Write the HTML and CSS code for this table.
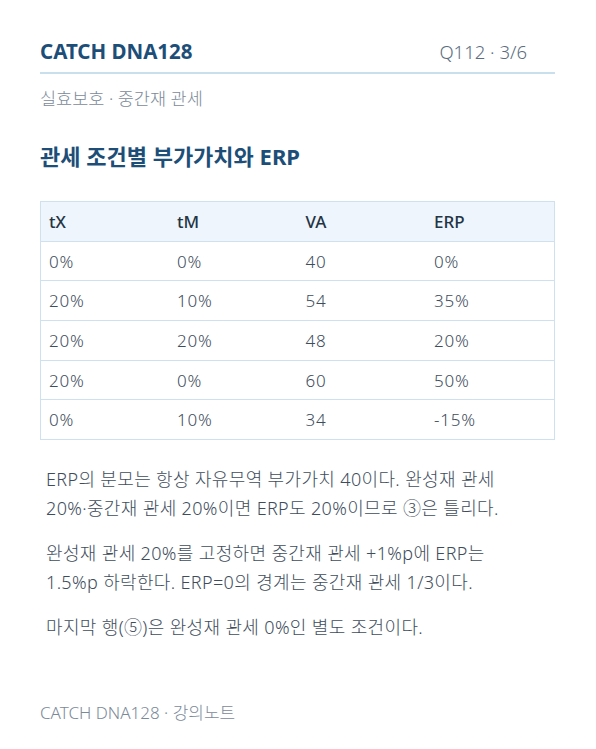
FILE: index.html
```html
<!DOCTYPE html>
<html lang="ko">
<head>
<meta charset="UTF-8">
<meta name="viewport" content="width=device-width, initial-scale=1.0">
<title>CATCH DNA128 · Q112</title>
<link rel="stylesheet" href="styles.css">
</head>
<body>

<div class="page">
    <!-- 상단 -->
    <div class="top">
        <div class="brand">CATCH DNA128</div>
        <div class="qnum">Q112 · 3/6</div>
    </div>
    <div class="crumb">실효보호 · 중간재 관세</div>

    <h1 class="title">관세 조건별 부가가치와 ERP</h1>

    <!-- 표 -->
    <table class="erp">
        <thead>
            <tr><th>tX</th><th>tM</th><th>VA</th><th>ERP</th></tr>
        </thead>
        <tbody>
            <tr><td>0%</td><td>0%</td><td>40</td><td>0%</td></tr>
            <tr><td>20%</td><td>10%</td><td>54</td><td>35%</td></tr>
            <tr><td>20%</td><td>20%</td><td>48</td><td>20%</td></tr>
            <tr><td>20%</td><td>0%</td><td>60</td><td>50%</td></tr>
            <tr><td>0%</td><td>10%</td><td>34</td><td>-15%</td></tr>
        </tbody>
    </table>

    <!-- 설명 -->
    <div class="notes">
        <p>ERP의 분모는 항상 자유무역 부가가치 40이다. 완성재 관세<br>20%·중간재 관세 20%이면 ERP도 20%이므로 ③은 틀리다.</p>
        <p>완성재 관세 20%를 고정하면 중간재 관세 +1%p에 ERP는<br>1.5%p 하락한다. ERP=0의 경계는 중간재 관세 1/3이다.</p>
        <p>마지막 행(⑤)은 완성재 관세 0%인 별도 조건이다.</p>
    </div>

    <div class="foot">CATCH DNA128 · 강의노트</div>
</div>

</body>
</html>
```

FILE: styles.css
```css
body {
    margin: 0;
    background: #ffffff;
    font-family: 'Noto Sans', 'Noto Sans CJK KR', sans-serif;
    color: #3e4d5c;
}

.page {
    width: 596px;
    height: 749px;
    box-sizing: border-box;
    padding: 37px 41px 0 40px;
    display: flex;
    flex-direction: column;
}

/* 상단 */
.top {
    display: flex;
    justify-content: space-between;
    align-items: baseline;
    padding-bottom: 7px;
    border-bottom: 2px solid #c9dfee;
}
.brand {
    font-size: 20.5px;
    font-weight: bold;
    color: #1d4e78;
}
.qnum {
    font-size: 18.5px;
    font-weight: 300;
    color: #5b6e80;
    margin-right: 28px;
}
.crumb {
    margin-top: 11px;
    font-size: 17.5px;
    font-weight: 300;
    color: #7b8a99;
}

.title {
    margin: 31px 0 0;
    font-size: 22px;
    font-weight: bold;
    color: #1d4e78;
    line-height: 30px;
}

/* 표 */
.erp {
    margin-top: 30px;
    width: 100%;
    border-collapse: collapse;
    table-layout: fixed;
    font-size: 17px;
}
.erp th,
.erp td {
    text-align: left;
    height: 38.7px;
    padding: 0 8px;
    border: 1px solid #cfe1ee;
    border-left: none;
    border-right: none;
}
.erp th {
    background: #eef5fc;
    font-weight: 500;
    color: #233445;
}
.erp tr > :first-child { border-left: 1px solid #cfe1ee; }
.erp tr > :last-child { border-right: 1px solid #cfe1ee; }
.erp td {
    font-weight: 300;
    color: #3e4d5c;
    letter-spacing: 0.8px;
}

/* 설명 */
.notes {
    margin-top: 25px;
    padding-left: 6px;
    font-size: 18px;
    font-weight: 300;
    line-height: 29px;
    letter-spacing: 0.35px;
    white-space: nowrap;
}
.notes p {
    margin: 0 0 16px;
}

.foot {
    margin-top: auto;
    margin-bottom: 25px;
    font-size: 17px;
    font-weight: 300;
    color: #7b8a99;
}
```
